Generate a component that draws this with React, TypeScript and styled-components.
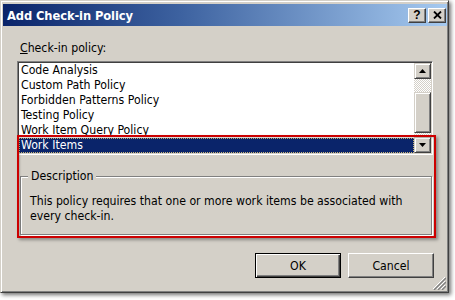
import React from 'react';
import styled, { createGlobalStyle } from 'styled-components';

const FONT = `"DejaVu Sans Condensed", "DejaVu Sans", "Liberation Sans", sans-serif`;

const Global = createGlobalStyle`
  html, body { margin: 0; padding: 0; background: #fff; }
  body { font-family: ${FONT}; font-size: 12.2px; color: #000; }
  * { box-sizing: border-box; }
`;

const Page = styled.div`
  width: 455px;
  height: 300px;
  position: relative;
  overflow: hidden;
  background: #fff;
`;

const Window = styled.div`
  position: relative;
  width: 449px;
  height: 293px;
  background: #d4d0c8;
  border-top: 1px solid #d4d0c8;
  border-left: 1px solid #d4d0c8;
  border-right: 1px solid #404040;
  border-bottom: 1px solid #404040;
  box-shadow: inset 1px 1px 0 #fff, inset -1px -1px 0 #808080,
    2px 2px 4px rgba(0, 0, 0, 0.55);
  padding: 3px 1px 2px 2px;
  display: flex;
  flex-direction: column;
`;

const TitleBar = styled.div`
  height: 22px;
  flex: none;
  display: flex;
  align-items: center;
  padding: 0 1px 0 4px;
  background: linear-gradient(to right, #0a246a 0%, #3d62a0 40%, #a6caf0 100%);
`;

const Title = styled.div`
  flex: 1;
  color: #fff;
  font-weight: bold;
  font-size: 12.8px;
  letter-spacing: -0.1px;
`;

const CaptionButton = styled.div`
  width: 18px;
  height: 15px;
  margin-left: 2px;
  background: #d4d0c8;
  border-top: 1px solid #fff;
  border-left: 1px solid #fff;
  border-right: 1px solid #404040;
  border-bottom: 1px solid #404040;
  box-shadow: inset -1px -1px 0 #808080;
  display: flex;
  align-items: center;
  justify-content: center;
  font-weight: bold;
  font-size: 12px;
  font-family: "Liberation Sans", Arial, sans-serif;
  line-height: 1;
`;

const Body = styled.div`
  flex: 1;
  display: flex;
  flex-direction: column;
  padding: 0 13px 0 14px;
`;

const Label = styled.div`
  margin-top: 15px;
  line-height: 14px;
  height: 14px;
  padding-left: 3px;
  u { text-decoration: underline; text-underline-offset: 1px; }
`;

const ListBox = styled.div`
  margin-top: 6px;
  width: 416px;
  height: 94px;
  background: #fff;
  border-top: 1px solid #808080;
  border-left: 1px solid #808080;
  border-right: 1px solid #fff;
  border-bottom: 1px solid #fff;
  box-shadow: inset 1px 1px 0 #404040, inset -1px -1px 0 #d4d0c8;
  padding: 1px;
  display: flex;
`;

const Items = styled.div`
  flex: 1;
  display: flex;
  flex-direction: column;
  overflow: hidden;
`;

const Item = styled.div<{ $selected?: boolean }>`
  height: 15px;
  line-height: 15px;
  padding-left: 2px;
  white-space: nowrap;
  background: ${(p) => (p.$selected ? '#0a246a' : 'transparent')};
  color: ${(p) => (p.$selected ? '#fff' : '#000')};
  outline: ${(p) => (p.$selected ? '1px dotted #c8b478' : 'none')};
  outline-offset: -1px;
`;

const ScrollBar = styled.div`
  width: 17px;
  display: flex;
  flex-direction: column;
`;

const ScrollButton = styled.div`
  height: 16px;
  flex: none;
  background: #d4d0c8;
  border-top: 1px solid #d4d0c8;
  border-left: 1px solid #d4d0c8;
  border-right: 1px solid #404040;
  border-bottom: 1px solid #404040;
  box-shadow: inset 1px 1px 0 #fff, inset -1px -1px 0 #808080;
  display: flex;
  align-items: center;
  justify-content: center;
`;

const Track = styled.div<{ $h: number }>`
  height: ${(p) => p.$h}px;
  flex: none;
  background-color: #fff;
  background-image: linear-gradient(45deg, #d4d0c8 25%, transparent 25%, transparent 75%, #d4d0c8 75%),
    linear-gradient(45deg, #d4d0c8 25%, transparent 25%, transparent 75%, #d4d0c8 75%);
  background-size: 2px 2px;
  background-position: 0 0, 1px 1px;
`;

const Thumb = styled(ScrollButton)`
  height: auto;
  flex: 1;
`;

const GroupBox = styled.div`
  position: relative;
  margin-top: 21px;
  margin-left: 3px;
  width: 412px;
  height: 59px;
  border: 1px solid #808080;
  box-shadow: 1px 1px 0 #fff, inset 1px 1px 0 #fff;
  padding: 17px 0 0 9px;
  line-height: 15px;
`;

const Legend = styled.span`
  position: absolute;
  top: -8px;
  left: 7px;
  padding: 0 3px;
  line-height: 15px;
  background: #d4d0c8;
`;

const ButtonRow = styled.div`
  margin-top: 18px;
  width: 417px;
  display: flex;
  justify-content: flex-end;
  gap: 7px;
`;

const Button = styled.div<{ $default?: boolean }>`
  width: 86px;
  height: 25px;
  display: flex;
  align-items: center;
  justify-content: center;
  background: #d4d0c8;
  ${(p) =>
    p.$default
      ? `border: 1px solid #000;
         box-shadow: inset 1px 1px 0 #fff, inset -1px -1px 0 #404040, inset -2px -2px 0 #808080;`
      : `border-top: 1px solid #fff; border-left: 1px solid #fff;
         border-right: 1px solid #404040; border-bottom: 1px solid #404040;
         box-shadow: inset -1px -1px 0 #808080;`}
`;

const Grip = styled.svg`
  position: absolute;
  right: 2px;
  bottom: 2px;
`;

const Annotation = styled.div`
  position: absolute;
  left: 17px;
  top: 135px;
  width: 419px;
  height: 103px;
  border: 2px solid #cc0000;
  box-shadow: 2px 2px 3px rgba(0, 0, 0, 0.35), inset 1px 1px 2px rgba(0, 0, 0, 0.2);
  pointer-events: none;
`;

const items = [
  'Code Analysis',
  'Custom Path Policy',
  'Forbidden Patterns Policy',
  'Testing Policy',
  'Work Item Query Policy',
  'Work Items',
];

export default function App() {
  return (
    <Page>
      <Global />
      <Window>
        <TitleBar>
          <Title>Add Check-in Policy</Title>
          <CaptionButton>?</CaptionButton>
          <CaptionButton>
            <svg width="9" height="8" viewBox="0 0 9 8">
              <path d="M1 0.5 L8 7.5 M8 0.5 L1 7.5" stroke="#000" strokeWidth="1.8" />
            </svg>
          </CaptionButton>
        </TitleBar>
        <Body>
          <Label>
            <u>C</u>heck-in policy:
          </Label>
          <ListBox>
            <Items>
              {items.map((t, i) => (
                <Item key={t} $selected={i === items.length - 1}>
                  {t}
                </Item>
              ))}
            </Items>
            <ScrollBar>
              <ScrollButton>
                <svg width="7" height="4" viewBox="0 0 7 4">
                  <path d="M3.5 0 L7 4 L0 4 Z" fill="#000" />
                </svg>
              </ScrollButton>
              <Track $h={13} />
              <Thumb />
              <Track $h={4} />
              <ScrollButton>
                <svg width="7" height="4" viewBox="0 0 7 4">
                  <path d="M0 0 L7 0 L3.5 4 Z" fill="#000" />
                </svg>
              </ScrollButton>
            </ScrollBar>
          </ListBox>
          <GroupBox>
            <Legend>Description</Legend>
            This policy requires that one or more work items be associated with
            <br />
            every check-in.
          </GroupBox>
          <ButtonRow>
            <Button $default>OK</Button>
            <Button>Cancel</Button>
          </ButtonRow>
        </Body>
        <Grip width="14" height="14" viewBox="0 0 14 14">
          <path d="M13 1 L1 13 M13 5 L5 13 M13 9 L9 13" stroke="#fff" strokeWidth="1" />
          <path d="M14 2 L2 14 M14 6 L6 14 M14 10 L10 14" stroke="#808080" strokeWidth="1.4" />
        </Grip>
      </Window>
      <Annotation />
    </Page>
  );
}
